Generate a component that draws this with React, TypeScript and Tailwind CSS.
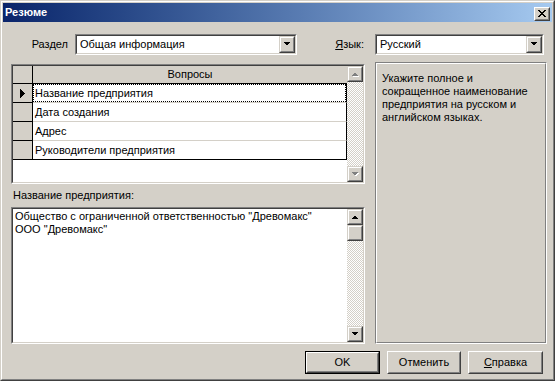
import React from "react";

const rows = [
  "Название предприятия",
  "Дата создания",
  "Адрес",
  "Руководители предприятия",
];

// small black triangle used by combos and scroll buttons
function Arrow({ up = false, disabled = false }: { up?: boolean; disabled?: boolean }) {
  const pts = up ? "0,4 7,4 3.5,0.5" : "0,0 7,0 3.5,3.5";
  const ptsShadow = up ? "1,5 8,5 4.5,1.5" : "1,1 8,1 4.5,4.5";
  return (
    <svg width="8" height="5" viewBox="0 0 8 5" shapeRendering="crispEdges">
      {disabled && <polygon points={ptsShadow} fill="#ffffff" />}
      <polygon points={pts} fill={disabled ? "#808080" : "#000000"} />
    </svg>
  );
}

function ScrollBtn({ up = false, disabled = false }: { up?: boolean; disabled?: boolean }) {
  return (
    <div className="h-[16px] w-[16px] shrink-0 border border-t-[#d4d0c8] border-l-[#d4d0c8] border-r-[#404040] border-b-[#404040]">
      <div className="flex h-full w-full items-center justify-center border border-t-white border-l-white border-r-[#808080] border-b-[#808080] bg-[#d4d0c8]">
        <Arrow up={up} disabled={disabled} />
      </div>
    </div>
  );
}

function ScrollBar({ disabled = false, thumb = false }: { disabled?: boolean; thumb?: boolean }) {
  return (
    <div className="flex w-[16px] flex-col">
      <ScrollBtn up disabled={disabled} />
      {thumb && (
        <div className="h-[16px] w-[16px] shrink-0 border border-t-[#d4d0c8] border-l-[#d4d0c8] border-r-[#404040] border-b-[#404040]">
          <div className="h-full w-full border border-t-white border-l-white border-r-[#808080] border-b-[#808080] bg-[#d4d0c8]" />
        </div>
      )}
      <div className="flex-1 bg-[#d4d0c8] bg-[image:repeating-conic-gradient(#ffffff_0%_25%,#d4d0c8_0%_50%)] bg-[length:2px_2px]" />
      <ScrollBtn disabled={disabled} />
    </div>
  );
}

function Combo({ value, width }: { value: string; width: string }) {
  return (
    <div className={`h-[21px] ${width} border border-t-[#808080] border-l-[#808080] border-r-white border-b-white`}>
      <div className="flex h-full w-full border border-t-[#404040] border-l-[#404040] border-r-[#d4d0c8] border-b-[#d4d0c8] bg-white">
        <div className="flex flex-1 items-center pl-[3px]">{value}</div>
        <div className="h-[17px] w-[16px] border border-t-[#d4d0c8] border-l-[#d4d0c8] border-r-[#404040] border-b-[#404040]">
          <div className="flex h-full w-full items-center justify-center border border-t-white border-l-white border-r-[#808080] border-b-[#808080] bg-[#d4d0c8]">
            <Arrow />
          </div>
        </div>
      </div>
    </div>
  );
}

function Button({ children, def = false, width }: { children: React.ReactNode; def?: boolean; width: string }) {
  const inner = (
    <div className="h-full w-full border border-t-white border-l-white border-r-[#404040] border-b-[#404040]">
      <div className="flex h-full w-full items-center justify-center border border-t-[#d4d0c8] border-l-[#d4d0c8] border-r-[#808080] border-b-[#808080] bg-[#d4d0c8]">
        {children}
      </div>
    </div>
  );
  return (
    <div className={`h-[23px] ${width} ${def ? "border border-black" : ""}`}>{inner}</div>
  );
}

export default function App() {
  return (
    <div className="h-[381px] w-[555px] bg-[#d4d0c8] font-['Liberation_Sans',Arial,sans-serif] text-[11px] leading-[13px] text-black">
      <div className="h-full w-full border border-t-[#d4d0c8] border-l-[#d4d0c8] border-r-[#404040] border-b-[#404040]">
        <div className="flex h-full w-full flex-col border border-t-white border-l-white border-r-[#808080] border-b-[#808080] p-[1px]">
          {/* title bar */}
          <div className="flex h-[19px] items-center justify-between bg-linear-to-r from-[#0a246a] to-[#a6caf0] pl-[2px] pr-[2px]">
            <span className="font-bold text-white">Резюме</span>
            <div className="mt-[2px] h-[14px] w-[16px] border border-t-white border-l-white border-r-[#404040] border-b-[#404040]">
              <div className="flex h-full w-full items-center justify-center border border-t-[#d4d0c8] border-l-[#d4d0c8] border-r-[#808080] border-b-[#808080] bg-[#d4d0c8]">
                <svg width="8" height="7" viewBox="0 0 8 7" shapeRendering="crispEdges">
                  <path d="M0 0h2v1h-2zM6 0h2v1h-2zM1 1h2v1h-2zM5 1h2v1h-2zM2 2h4v1h-4zM3 3h2v1h-2zM2 4h4v1h-4zM1 5h2v1h-2zM5 5h2v1h-2zM0 6h2v1h-2zM6 6h2v1h-2z" fill="#000" />
                </svg>
              </div>
            </div>
          </div>

          {/* body */}
          <div className="flex flex-1 flex-col pl-[8px] pt-[12px]">
            <div className="flex h-[21px] items-center">
              <div className="w-[57px] text-right">Раздел</div>
              <div className="ml-[7px]">
                <Combo value="Общая информация" width="w-[222px]" />
              </div>
              <div className="w-[78px] pr-[11px] text-right">
                <span className="underline">Я</span>зык:
              </div>
              <Combo value="Русский" width="w-[169px]" />
            </div>

            <div className="mt-[7px] flex h-[282px]">
              <div className="flex w-[354px] flex-col">
                {/* grid */}
                <div className="mt-[2px] h-[120px] border border-t-[#808080] border-l-[#808080] border-r-white border-b-white">
                  <div className="flex h-full w-full border border-t-[#404040] border-l-[#404040] border-r-[#d4d0c8] border-b-[#d4d0c8] bg-white">
                    <div className="flex flex-1 flex-col">
                      <div className="flex h-[18px]">
                        <div className="w-[20px] border-r border-b border-black bg-[#d4d0c8]" />
                        <div className="flex flex-1 items-center justify-center border-b border-black bg-[#d4d0c8]">
                          Вопросы
                        </div>
                      </div>
                      {rows.map((r, i) => (
                        <div key={r} className="flex h-[19px]">
                          <div className="flex w-[20px] items-center justify-center border-r border-b border-black bg-[#d4d0c8]">
                            {i === 0 && (
                              <svg width="5" height="9" viewBox="0 0 5 9" shapeRendering="crispEdges">
                                <polygon points="0,0 5,4.5 0,9" fill="#000" />
                              </svg>
                            )}
                          </div>
                          <div
                            className={`flex flex-1 border-r border-black ${
                              i === rows.length - 1 ? "border-b border-b-black" : "border-b border-b-[#d4d0c8]"
                            }`}
                          >
                            <div
                              className={`flex flex-1 items-center pl-[1px] ${
                                i === 0 ? "border border-dotted border-black" : "border border-transparent"
                              }`}
                            >
                              {r}
                            </div>
                          </div>
                        </div>
                      ))}
                    </div>
                    <ScrollBar disabled />
                  </div>
                </div>

                <div className="flex h-[23px] items-center pl-[2px]">Название предприятия:</div>

                {/* memo */}
                <div className="flex-1 border border-t-[#808080] border-l-[#808080] border-r-white border-b-white">
                  <div className="flex h-full w-full border border-t-[#404040] border-l-[#404040] border-r-[#d4d0c8] border-b-[#d4d0c8] bg-white">
                    <div className="flex-1 pl-[2px] pt-[1px]">
                      <div>Общество с ограниченной ответственностью "Древомакс"</div>
                      <div>ООО "Древомакс"</div>
                    </div>
                    <ScrollBar thumb />
                  </div>
                </div>
              </div>

              {/* help panel */}
              <div className="ml-[10px] w-[172px] border border-t-[#808080] border-l-[#808080] border-r-white border-b-white">
                <div className="h-full w-full border border-t-white border-l-white border-r-[#808080] border-b-[#808080] pl-[5px] pr-[4px] pt-[8px]">
                  Укажите полное и сокращенное наименование предприятия на русском и английском языках.
                </div>
              </div>
            </div>

            <div className="mt-[7px] flex gap-[7px] pl-[294px]">
              <Button def width="w-[75px]">OK</Button>
              <Button width="w-[74px]">Отменить</Button>
              <Button width="w-[75px]">
                <span>
                  <span className="underline">С</span>правка
                </span>
              </Button>
            </div>
          </div>
        </div>
      </div>
    </div>
  );
}
